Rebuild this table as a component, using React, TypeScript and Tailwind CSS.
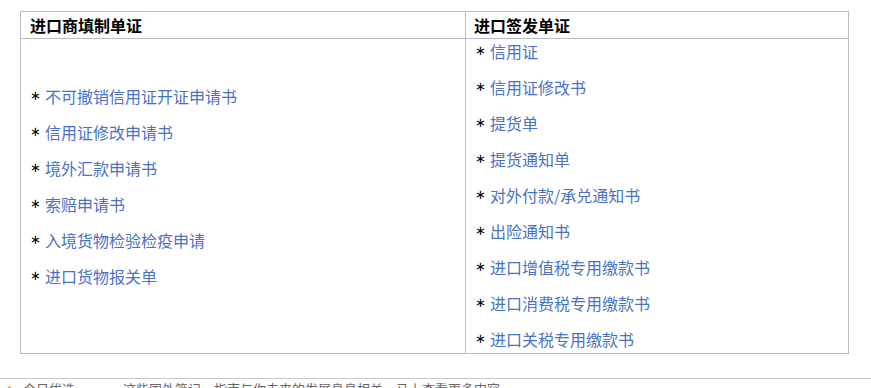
const importerDocs = [
  "不可撤销信用证开证申请书",
  "信用证修改申请书",
  "境外汇款申请书",
  "索赔申请书",
  "入境货物检验检疫申请",
  "进口货物报关单",
];

const issuedDocs = [
  "信用证",
  "信用证修改书",
  "提货单",
  "提货通知单",
  "对外付款/承兑通知书",
  "出险通知书",
  "进口增值税专用缴款书",
  "进口消费税专用缴款书",
  "进口关税专用缴款书",
];

function DocItem({ label }: { label: string }) {
  return (
    <div className="flex items-center h-5 leading-5">
      <span className="w-[15px] text-black text-[13px] font-['DejaVu_Sans',sans-serif]">∗</span>
      <a href="#" className="text-[#4a72c4] text-[16px]">
        {label}
      </a>
    </div>
  );
}

export default function App() {
  return (
    <div className="w-[871px] h-[388px] overflow-hidden bg-white font-['Noto_Sans_CJK_SC','Noto_Sans',sans-serif]">
      <div className="pt-[11px] pl-5">
        <div className="w-[829px] border border-[#b7bcc5]">
          <div className="grid grid-cols-[445px_1fr] h-[27px] border-b border-[#b7bcc5]">
            <div className="pl-[9px] flex items-center text-[16px] font-bold text-black border-r border-[#b7bcc5]">
              进口商填制单证
            </div>
            <div className="pl-[8px] flex items-center text-[16px] font-bold text-black">
              进口签发单证
            </div>
          </div>
          <div className="grid grid-cols-[445px_1fr] h-[314px]">
            <div className="pl-[9px] pb-[20px] flex flex-col justify-center gap-4 border-r border-[#b7bcc5]">
              {importerDocs.map((d) => (
                <DocItem key={d} label={d} />
              ))}
            </div>
            <div className="pl-[9px] pt-[2px] flex flex-col gap-4">
              {issuedDocs.map((d) => (
                <DocItem key={d} label={d} />
              ))}
            </div>
          </div>
        </div>
      </div>
      <div className="mt-[24px] border-t border-[#c8c8c8] flex items-start gap-2 pl-[4px] pt-[2px] text-[13px] leading-4 text-[#666]">
        <span className="text-[#e8894a]">✦</span>
        <span>今日优选</span>
        <span className="ml-10">这些国外笔记，指南与你未来的发展息息相关，马上查看更多内容</span>
      </div>
    </div>
  );
}
